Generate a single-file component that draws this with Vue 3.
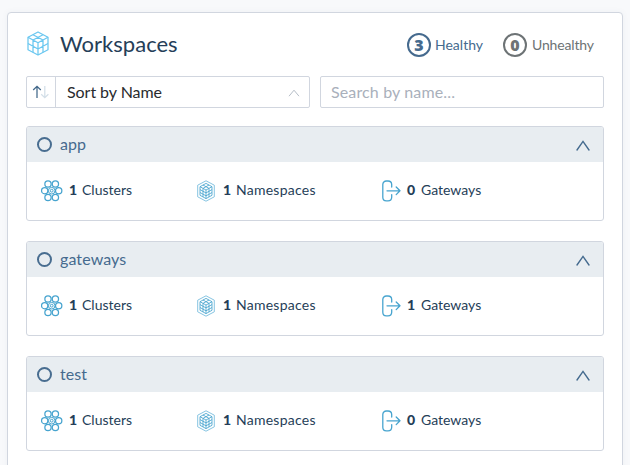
<script setup>
const workspaces = [
  { name: 'app', clusters: 1, namespaces: 1, gateways: 0 },
  { name: 'gateways', clusters: 1, namespaces: 1, gateways: 1 },
  { name: 'test', clusters: 1, namespaces: 1, gateways: 0 },
]
// Rounded cells around the hub of the cluster icon
const cells = [[7, 4], [14.4, 4], [3.7, 10.7], [17.7, 10.7], [7, 17.4], [14.4, 17.4]]
</script>

<template>
  <div class="page">
    <main class="panel">
      <header class="top">
        <svg class="logo" viewBox="0 0 22 25" fill="none" stroke="#6ac7f0" stroke-width="1.25" stroke-linejoin="round">
          <path d="M11 1 21 6.3V18.7L11 24 1 18.7V6.3Z" />
          <path d="M1 6.3 11 11.8 21 6.3M11 11.8V24M6 3.7 16 9V21.3M16 3.7 6 9V21.3M1 12.5 11 18 21 12.5" />
        </svg>
        <h1>Workspaces</h1>
        <div class="health good"><span class="badge"><b>3</b></span><span class="word">Healthy</span></div>
        <div class="health bad"><span class="badge"><b>0</b></span><span class="word">Unhealthy</span></div>
      </header>

      <div class="filters">
        <div class="sort">
          <span class="order">
            <svg width="18" height="14" viewBox="0 0 18 14" fill="none" stroke-width="1.25">
              <path d="M9.2 9.3 12.8 12.7 16.4 9.3M12.8 12.4V1" stroke="#d3dfe8" />
              <path d="M1.2 5 5 1.3 8.8 5M5 1.6V13" stroke="#42688a" />
            </svg>
          </span>
          <span class="choice">Sort by Name</span>
          <svg class="caret" width="12" height="8" viewBox="0 0 12 8" fill="none" stroke="#b5bdc7"><path d="M1 7.2 6 1.2 11 7.2" /></svg>
        </div>
        <input class="search" placeholder="Search by name..." />
      </div>

      <section v-for="w in workspaces" :key="w.name" class="workspace">
        <div class="bar">
          <span class="ring"></span>
          <span class="name">{{ w.name }}</span>
          <svg width="14" height="11" viewBox="0 0 14 11" fill="none" stroke="#456b8f" stroke-width="1.4" stroke-linecap="round"><path d="M1 10 7 1.4 13 10" /></svg>
        </div>
        <div class="stats">
          <div class="stat">
            <svg width="22" height="22" viewBox="0 0 22 22" fill="none" stroke="#47a4cf" stroke-width="1.25" stroke-linejoin="round">
              <circle v-for="(c, i) in cells" :key="i" :cx="c[0]" :cy="c[1]" r="3.15" />
              <circle cx="10.7" cy="10.7" r="3.3" stroke-width="1" /><circle cx="10.7" cy="10.7" r="1.4" stroke-width="1" />
            </svg>
            <b>{{ w.clusters }}</b><span class="clusters">Clusters</span>
          </div>
          <div class="stat">
            <svg width="18" height="22" viewBox="0 0 18 22" fill="none" stroke="#47a4cf" stroke-width=".85" stroke-linejoin="round">
              <path d="M9 .8 17.3 5.2V16.8L9 21.2.7 16.8V5.2Z" stroke="#70b9dc" />
              <path d="M9 3.4 15 6.7V15.3L9 18.6 3 15.3V6.7ZM3 6.7 9 10 15 6.7M9 10V18.6M6 5 12 8.4V17M12 5 6 8.4V17M3 9.6 9 12.9 15 9.6M3 12.5 9 15.8 15 12.5" />
            </svg>
            <b>{{ w.namespaces }}</b><span class="namespaces">Namespaces</span>
          </div>
          <div class="stat">
            <svg width="19" height="22" viewBox="0 0 19 22" fill="none" stroke="#47a4cf" stroke-width="1.3" stroke-linecap="round" stroke-linejoin="round">
              <path d="M9.7 7V4.5A3.7 3.7 0 0 0 6 1H4.3A3.5 3.5 0 0 0 .8 4.5V17.2A3.6 3.6 0 0 0 4.3 20.8H6A3.7 3.7 0 0 0 9.7 17.2V14.6M5 10.8H18M14.2 7 18 10.8 14.2 14.6" />
            </svg>
            <b>{{ w.gateways }}</b><span class="gates">Gateways</span>
          </div>
        </div>
      </section>
    </main>
  </div>
</template>

<style>
body { background: #f8f9fb; overflow: hidden; }
</style>

<style scoped>
* { box-sizing: border-box; }
.page { height: 465px; padding: 12px 7px 0; overflow: hidden; font-family: Lato, "Open Sans", sans-serif; color: #253e58; }
.panel { height: 480px; padding: 0 18px; background: #fff; border: 1px solid #d1d6df; border-radius: 4px; box-shadow: 0 0 6px rgba(50, 70, 100, .05); }
.top { display: flex; align-items: center; height: 63px; padding-right: 9px; white-space: nowrap; }
.logo { width: 22px; height: 25px; margin: 0 11px 3px 1px; }
h1 { flex: 1; margin: 0; padding-bottom: 2px; font-size: 22px; line-height: 28px; font-weight: 400; letter-spacing: .02px; }
.health { display: flex; align-items: center; gap: 4px; padding-top: 1px; font-size: 14px; }
.word { padding-bottom: 2px; }
.good { width: 76px; margin-right: 20px; color: #456a8e; }
.bad { width: 92px; color: #6d7375; }
.bad .word { padding-left: 1px; letter-spacing: -.15px; }
.badge { display: flex; align-items: center; justify-content: center; flex: none; width: 24px; height: 24px; border: 2px solid; border-radius: 50%; font: 700 16px/20px "Open Sans", sans-serif; }
.badge b { padding-bottom: 1px; }
.filters { display: grid; grid-template-columns: 284px 284px; gap: 10px; height: 32px; margin-bottom: 18px; }
.sort { display: flex; align-items: center; border: 1px solid #d1d6df; border-radius: 2px; padding-right: 9px; }
.order { display: flex; align-items: center; width: 29px; height: 30px; padding-left: 5px; border-right: 1px solid #d1d6df; }
.choice { flex: 1; padding: 0 0 2px 11px; font-size: 16px; letter-spacing: -.05px; color: #292b2e; }
.caret { margin-top: 2px; }
.search { width: 284px; height: 32px; padding: 0 10px 2px; border: 1px solid #d1d6df; border-radius: 2px; outline: none; font: 16px Lato, sans-serif; letter-spacing: .14px; }
.search::placeholder { color: #a9b0bb; opacity: 1; }
.workspace { height: 95px; margin-bottom: 20px; border: 1px solid #d1d6df; border-radius: 3px; overflow: hidden; }
.bar { display: flex; align-items: center; height: 35px; padding: 0 13px 0 10px; background: #e8edf1; }
.bar svg { margin-top: 1px; }
.ring { width: 15px; height: 15px; margin-right: 8px; border: 2px solid #486d90; border-radius: 50%; }
.name { flex: 1; padding-bottom: 2px; font-size: 16px; letter-spacing: .1px; color: #456a8e; }
.stats { display: grid; grid-template-columns: 156px 185px 1fr; padding: 0 14px; height: 57px; }
.stat { display: flex; align-items: center; font-size: 14px; }
.stat b { width: 8px; margin: 0 5px 0 6px; font-weight: 900; }
.stat b, .stat span { padding-bottom: 2px; }
.stat:nth-child(2) b { margin-left: 8px; }
.stat:nth-child(3) b { margin-right: 6px; }
.namespaces { letter-spacing: .25px; }
</style>
